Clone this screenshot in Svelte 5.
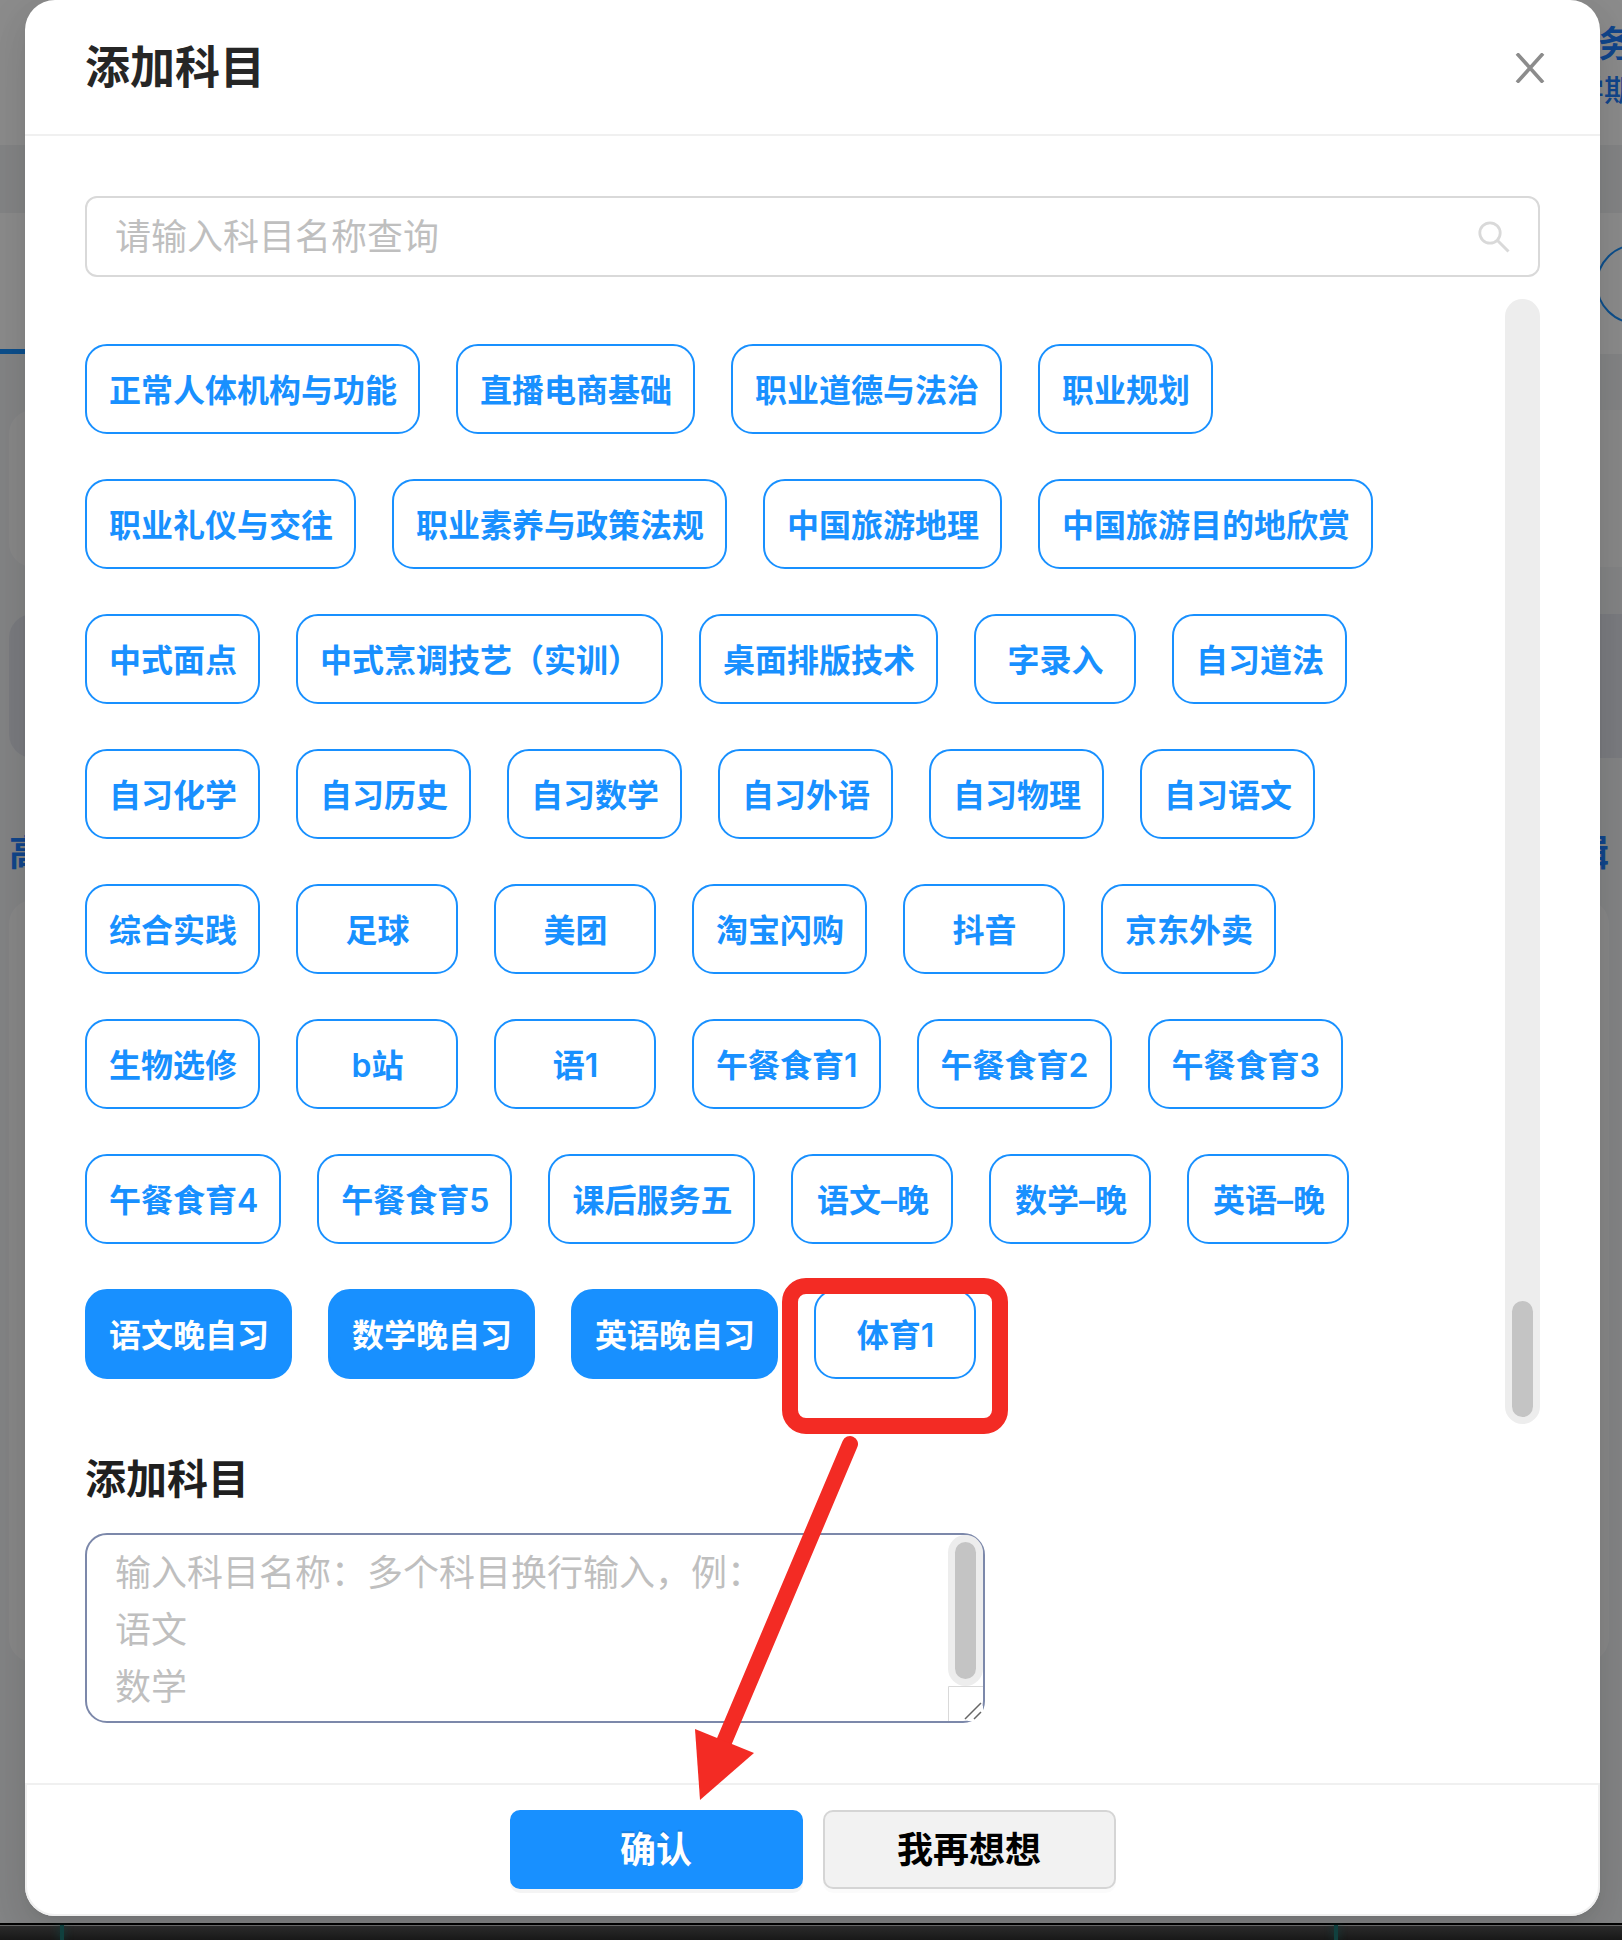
<script lang="ts">
    let subjects: any = [
        "正常人体机构与功能", "直播电商基础", "职业道德与法治", "职业规划",
        "职业礼仪与交往", "职业素养与政策法规", "中国旅游地理", "中国旅游目的地欣赏",
        "中式面点", "中式烹调技艺（实训）", "桌面排版技术", "字录入", "自习道法",
        "自习化学", "自习历史", "自习数学", "自习外语", "自习物理", "自习语文",
        "综合实践", "足球", "美团", "淘宝闪购", "抖音", "京东外卖",
        "生物选修", "b站", "语1", "午餐食育1", "午餐食育2", "午餐食育3",
        "午餐食育4", "午餐食育5", "课后服务五", "语文–晚", "数学–晚", "英语–晚",
        "语文晚自习", "数学晚自习", "英语晚自习", "体育1"
    ];
    let selected: any = ["语文晚自习", "数学晚自习", "英语晚自习"];
    let keyword = "";
    let newSubjects = "";

    $: shown = subjects.filter((s: any) => s.includes(keyword.trim()));

    function toggle(name: any){
        if(selected.includes(name)){
            selected = selected.filter((s: any) => s !== name);
        } else{
            selected = [...selected, name];
        }
    }

    function confirm(){
        const names = newSubjects.split("\n").map((s: any) => s.trim()).filter((s: any) => s !== "");
        subjects = [...subjects, ...names];
        newSubjects = "";
    }
</script>

<div class="app">
    <div class="stage">
        <div class="page">
            <div class="topbar">
                <strong>务</strong>
                <span>学期</span>
            </div>
            <div class="strip"></div>
            <div class="tabs"><i class="round"></i></div>
            <div class="content">
                <div class="panel"></div>
                <div class="panel tinted"></div>
                <div class="row-title"><span>高</span><span>辑</span></div>
                <div class="panel tall"></div>
            </div>
        </div>
        <div class="mask"></div>

        <div class="modal" role="dialog" aria-labelledby="modal-title">
            <header>
                <h1 id="modal-title">添加科目</h1>
                <button class="close" type="button" aria-label="关闭">
                    <svg viewBox="0 0 30 30" width="30" height="30">
                        <path d="M2 0.5L28 29.5M28 0.5L2 29.5" stroke="#8c8c8c" stroke-width="3.6" fill="none" />
                    </svg>
                </button>
            </header>

            <div class="body">
                <div class="search">
                    <input bind:value={keyword} placeholder="请输入科目名称查询" aria-label="请输入科目名称查询">
                    <svg viewBox="0 0 32 32" width="32" height="32">
                        <circle cx="12" cy="12" r="10.2" fill="none" stroke="#d9d9d9" stroke-width="2.8" />
                        <path d="M19.5 19.5L30.5 30.5" stroke="#d9d9d9" stroke-width="3" />
                    </svg>
                </div>

                <div class="list">
                    <div class="chips">
                        {#each shown as name}
                            <button class="chip" type="button" class:active={selected.includes(name)} on:click={() => toggle(name)}>{name}</button>
                        {/each}
                    </div>
                    <div class="rail"><div class="thumb"></div></div>
                </div>

                <h2><label for="new-subjects">添加科目</label></h2>
                <div class="textbox">
                    <textarea id="new-subjects" bind:value={newSubjects} placeholder={"输入科目名称：多个科目换行输入，例：\n语文\n数学"}></textarea>
                    <div class="side">
                        <div class="rail"><div class="thumb full"></div></div>
                        <svg class="grip" viewBox="0 0 35 35" width="35" height="35">
                            <path d="M0.5 35V0.5H35" fill="none" stroke="#d9d9d9" />
                            <path d="M35 19V35H19Z" fill="#fff" />
                            <path d="M17 33L33 17M26 33L33 26" fill="none" stroke="#666" stroke-width="1.5" />
                        </svg>
                    </div>
                </div>
            </div>

            <footer>
                <button class="btn primary" type="button" on:click={confirm}>确认</button>
                <button class="btn" type="button">我再想想</button>
            </footer>

            <!-- guide mark: pick a subject, then confirm -->
            <svg class="guide" viewBox="690 1270 330 540" width="330" height="540">
                <rect x="790" y="1286" width="210" height="140" rx="16" fill="none" stroke="#f32b24" stroke-width="16" />
                <path d="M850 1444L724 1742" stroke="#f32b24" stroke-width="16" stroke-linecap="round" />
                <path d="M695 1729L754 1753L700 1800Z" fill="#f32b24" />
            </svg>
        </div>
    </div>
    <div class="dock"><i></i><i></i></div>
</div>

<style>
    :global(body){
        margin: 0;
        background: #1c1c1c;
    }
    .app{
        font-family: Inter, "Noto Sans CJK SC", sans-serif;
        overflow: hidden;
    }
    .app *{
        box-sizing: border-box;
    }
    button, input, textarea{
        font-family: inherit;
    }
    button{
        cursor: pointer;
    }

    .stage{
        position: relative;
        padding: 0 22px 7px 25px;
        overflow: hidden;
    }
    .page, .mask{
        position: absolute;
        inset: 0;
    }
    .mask{
        background: rgba(0, 0, 0, .45);
    }
    .page{
        background: #f0f2f5;
        color: #1f80ff;
    }
    .topbar{
        height: 145px;
        padding-top: 18px;
        background: #fff;
        display: flex;
        flex-direction: column;
        align-items: flex-end;
    }
    .topbar strong, .topbar span{
        margin-right: -12px;
        line-height: 52px;
        font-size: 36px;
    }
    .topbar span{
        line-height: 40px;
        font-size: 30px;
        font-weight: 500;
    }
    .strip{
        height: 68px;
    }
    .tabs{
        height: 141px;
        padding-top: 31px;
        background: #fff;
        border-bottom: 5px solid #1890ff;
        border-image: linear-gradient(90deg, #1890ff 50%, #fff 50%) 5;
        display: flex;
        justify-content: flex-end;
    }
    .round{
        width: 80px;
        height: 80px;
        margin-right: -54px;
        border: 2px solid #1890ff;
        border-radius: 50%;
    }
    .content{
        padding: 56px 0 0 9px;
    }
    .panel{
        height: 157px;
        border-radius: 24px 0 0 24px;
        background: #fafafa;
    }
    .tinted{
        height: 144px;
        margin-top: 47px;
        background: #e0e2ea;
    }
    .tall{
        height: 762px;
        margin-right: 13px;
        border-radius: 24px;
    }
    .row-title{
        height: 142px;
        padding-right: 13px;
        display: flex;
        justify-content: space-between;
        line-height: 190px;
        font-size: 36px;
        font-weight: 700;
    }

    .modal{
        position: relative;
        background: #fff;
        border-radius: 30px;
        box-shadow: 0 6px 12px -8px rgba(0, 0, 0, .12), 0 12px 32px rgba(0, 0, 0, .08), 0 18px 56px 16px rgba(0, 0, 0, .05);
    }
    header{
        height: 136px;
        padding: 2px 55px 0 60px;
        border-bottom: 2px solid #f0f0f0;
        display: flex;
        align-items: center;
        justify-content: space-between;
    }
    h1, h2{
        margin: 0;
        color: #262626;
        font-size: 45px;
        line-height: 60px;
        font-weight: 700;
    }
    h2{
        margin: 25px 0 24px;
        color: #1f1f1f;
        font-size: 41px;
    }
    .close{
        padding: 0;
        border: none;
        background: transparent;
        display: flex;
    }
    .body{
        padding: 60px;
    }
    .search{
        height: 81px;
        padding: 0 28px;
        border: 2px solid #d9d9d9;
        border-radius: 12px;
        display: flex;
        align-items: center;
    }
    .search input{
        flex: 1;
        padding: 1px 0 0;
        border: none;
        outline: none;
        font-size: 36px;
        line-height: 56px;
        background: transparent;
    }
    ::placeholder{
        color: #bfbfbf;
        opacity: 1;
    }

    .list{
        margin-top: 22px;
        display: flex;
    }
    .chips{
        flex: 1;
        padding: 45px 36px 45px 0;
        display: flex;
        flex-wrap: wrap;
        align-content: flex-start;
        gap: 45px 36px;
    }
    .chip{
        height: 90px;
        min-width: 162px;
        padding: 4px 21px 0 22px;
        border: 2px solid #1890ff;
        border-radius: 22px;
        background: #fff;
        color: #1890ff;
        font-size: 32px;
        font-weight: 600;
        line-height: 48px;
        white-space: nowrap;
    }
    .active{
        background: #1890ff;
        color: #fff;
    }
    .rail{
        width: 35px;
        padding: 7px;
        border-radius: 18px;
        background: #ededed;
        display: flex;
        align-items: flex-end;
    }
    .thumb{
        width: 100%;
        height: 116px;
        border-radius: 11px;
        background: #c4c4c4;
    }
    .full{
        height: 100%;
    }

    .textbox{
        width: 900px;
        max-width: 100%;
        height: 190px;
        border: 2px solid #7c88aa;
        border-radius: 22px;
        display: flex;
    }
    textarea{
        flex: 1;
        padding: 10px 0 4px 28px;
        border: none;
        outline: none;
        resize: none;
        overflow: hidden;
        background: transparent;
        font-size: 36px;
        line-height: 57px;
    }
    .side{
        display: flex;
        flex-direction: column;
    }
    .side .rail{
        flex: 1;
    }

    footer{
        padding: 25px 0;
        border: 2px solid #f0f0f0;
        border-radius: 0 0 30px 30px;
        display: flex;
        justify-content: center;
        gap: 20px;
    }
    .btn{
        width: 293px;
        height: 79px;
        padding: 0 0 5px;
        border: 2px solid #d5d5d5;
        border-radius: 10px;
        background: #f2f2f2;
        color: #000;
        font-size: 36px;
        font-weight: 600;
        box-shadow: 0 4px 0 rgba(0, 0, 0, .015);
    }
    .primary{
        border-color: #1890ff;
        background: #1890ff;
        color: #fff;
        text-shadow: 0 -2px 0 rgba(0, 0, 0, .12);
        box-shadow: 0 4px 0 rgba(0, 0, 0, .045);
    }

    .guide{
        position: absolute;
        left: 665px;
        top: 1270px;
        pointer-events: none;
    }

    .dock{
        height: 17px;
        padding: 0 284px 0 60px;
        border-top: 2px solid #000;
        box-shadow: inset 0 1px 0 #666;
        background: linear-gradient(#2c2c2c, #181818);
        display: flex;
        justify-content: space-between;
    }
    .dock i{
        width: 4px;
        height: 15px;
        background: #10403e;
        box-shadow: 0 0 8px #10403e;
    }
</style>
